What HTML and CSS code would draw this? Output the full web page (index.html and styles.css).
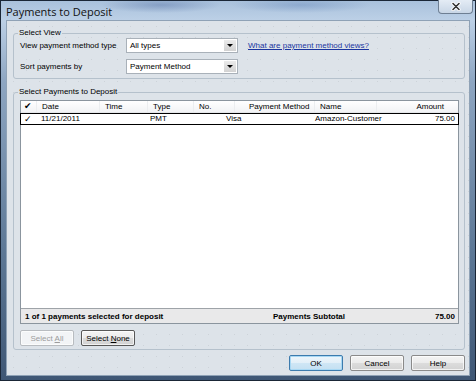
FILE: index.html
```html
<!DOCTYPE html>
<html lang="en">
<head>
    <meta charset="UTF-8">
    <title>Payments to Deposit</title>
    <link rel="stylesheet" href="styles.css">
</head>
<body>

<div class="window">
    <!-- Title bar -->
    <div class="titlebar">
        <span class="title">Payments to Deposit</span>
        <div class="close-btn">
            <svg width="10" height="9" viewBox="0 0 10 9">
                <path d="M2 1.5 L8 7.5 M8 1.5 L2 7.5" stroke="#fff" stroke-width="3.2" stroke-linecap="round"/>
                <path d="M2 1.5 L8 7.5 M8 1.5 L2 7.5" stroke="#333" stroke-width="1.6" stroke-linecap="round"/>
            </svg>
        </div>
    </div>

    <div class="client">
        <!-- Select View -->
        <fieldset class="group view-group">
            <legend>Select View</legend>
            <div class="field-row">
                <span class="field-label">View payment method type</span>
                <div class="combo">
                    <span class="combo-text">All types</span>
                    <span class="combo-arrow"></span>
                </div>
                <a class="help-link" href="#">What are payment method views?</a>
            </div>
            <div class="field-row">
                <span class="field-label">Sort payments by</span>
                <div class="combo">
                    <span class="combo-text">Payment Method</span>
                    <span class="combo-arrow"></span>
                </div>
            </div>
        </fieldset>

        <!-- Select Payments -->
        <fieldset class="group payments-group">
            <legend>Select Payments to Deposit</legend>
            <div class="list">
                <div class="list-head">
                    <span class="c-check">&#10004;</span>
                    <span class="c-date">Date</span>
                    <span class="c-time">Time</span>
                    <span class="c-type">Type</span>
                    <span class="c-no">No.</span>
                    <span class="c-method">Payment Method</span>
                    <span class="c-name">Name</span>
                    <span class="c-amount">Amount</span>
                </div>
                <div class="list-row selected">
                    <span class="c-check">&#10003;</span>
                    <span class="c-date">11/21/2011</span>
                    <span class="c-time"></span>
                    <span class="c-type">PMT</span>
                    <span class="c-no"></span>
                    <span class="c-method">Visa</span>
                    <span class="c-name">Amazon-Customer</span>
                    <span class="c-amount">75.00</span>
                </div>
                <div class="list-empty"></div>
                <div class="list-foot">
                    <span class="foot-count">1 of 1 payments selected for deposit</span>
                    <span class="foot-label">Payments Subtotal</span>
                    <span class="foot-total">75.00</span>
                </div>
            </div>
            <div class="select-buttons">
                <button class="btn" disabled>Select <u>A</u>ll</button>
                <button class="btn btn-dark">Select <u>N</u>one</button>
            </div>
        </fieldset>

        <div class="actions">
            <button class="btn btn-default">OK</button>
            <button class="btn">Cancel</button>
            <button class="btn">Help</button>
        </div>
    </div>
</div>

</body>
</html>
```

FILE: styles.css
```css
/* General Reset */
* {
    margin: 0;
    padding: 0;
    box-sizing: border-box;
    font-family: 'Liberation Sans', Arial, sans-serif;
}

body {
    background: #1d2b3a;
    width: 476px;
    height: 381px;
    overflow: hidden;
}

.window {
    width: 476px;
    height: 381px;
    border: 1px solid #1a2636;
    padding: 0 5px 4px 5px;
    display: flex;
    flex-direction: column;
    background:
        radial-gradient(ellipse 60px 8px at 160px 4px, rgba(60, 90, 150, 0.35), transparent),
        radial-gradient(ellipse 70px 8px at 300px 4px, rgba(70, 110, 170, 0.3), transparent),
        linear-gradient(to bottom, #a9c1dc, #bcd0e6 19px, #8ea6c2 80px, #5d7896 250px, #3f5775);
}

.titlebar {
    height: 19px;
    display: flex;
    align-items: center;
    position: relative;
}

.title {
    font-family: 'Open Sans', 'Liberation Sans', sans-serif;
    font-size: 11px;
    color: #111;
    margin-top: 1px;
    white-space: nowrap;
}

.close-btn {
    position: absolute;
    top: -1px;
    right: -3px;
    width: 35px;
    height: 14px;
    border: 1px solid #6e7f93;
    border-top: none;
    border-radius: 0 0 4px 4px;
    background: linear-gradient(to bottom, #e4ecf5, #c8d6e6);
    display: flex;
    align-items: center;
    justify-content: center;
}

.client {
    flex: 1;
    border: 1px solid #8fa2b6;
    background-color: #dde3e9;
    background-image: radial-gradient(circle, #cdd3d9 0.6px, transparent 1px);
    background-size: 13px 11px;
    display: flex;
    flex-direction: column;
    font-size: 8px;
    color: #000;
}

/* Group boxes */
.group {
    border: 1px solid #b5c1cc;
    border-radius: 3px;
    margin: 7px 4px 0 6px;
}

.group legend {
    font-size: 8px;
    line-height: 10px;
    padding: 0 1px;
    margin-left: -2px;
}

.view-group {
    padding: 0 0 4px 6px;
}

.field-row {
    display: flex;
    align-items: center;
    height: 15px;
    white-space: nowrap;
}

.field-row + .field-row {
    margin-top: 6px;
}

.field-label {
    width: 106px;
}

.combo {
    width: 112px;
    height: 15px;
    border: 1px solid #a9b1b9;
    background: #fff;
    display: flex;
    align-items: center;
    justify-content: space-between;
    padding: 0 1px 0 3px;
}

.combo-arrow {
    width: 12px;
    height: 11px;
    background: linear-gradient(to bottom, #ebebeb, #d2d2d2);
    position: relative;
}

.combo-arrow::after {
    content: "";
    position: absolute;
    left: 3px;
    top: 4px;
    border-left: 3px solid transparent;
    border-right: 3px solid transparent;
    border-top: 3px solid #000;
}

.help-link {
    margin-left: 10px;
    color: #1b36a0;
    text-decoration: underline;
}

/* Payments list */
.payments-group {
    margin-top: 8px;
    padding: 3px 5px 3px 6px;
}

.list {
    height: 224px;
    border: 1px solid #8b959e;
    background: #fff;
    display: flex;
    flex-direction: column;
}

.list-head,
.list-row {
    display: grid;
    grid-template-columns: 16px 63px 48px 46px 41px 80px 62px 1fr;
    align-items: center;
    white-space: nowrap;
}

.list-head {
    height: 12px;
    background: linear-gradient(to bottom, #fff, #f2f3f5);
    border-bottom: 1px solid #e4e6e9;
}

.list-head span {
    padding-left: 5px;
    border-right: 1px solid #eceef0;
    line-height: 11px;
}

.list-head .c-check,
.list-row .c-check {
    padding-left: 3px;
    font-family: 'DejaVu Sans', sans-serif;
    font-size: 9px;
}

.list-head .c-method {
    padding-left: 14px;
}

.list-head .c-amount {
    text-align: right;
    padding-right: 14px;
    border-right: none;
}

.list-row {
    height: 12px;
    border: 1px solid #000;
    margin: 0 -1px;
    line-height: 10px;
}

.list-row .c-date {
    padding-left: 4px;
}

.list-row .c-type {
    padding-left: 2px;
}

.list-row .c-method {
    margin-left: -9px;
}

.list-row .c-amount {
    text-align: right;
    padding-right: 3px;
}

.list-empty {
    flex: 1;
}

.list-foot {
    height: 15px;
    border-top: 1px solid #9ea3a8;
    background: #e9e9ea;
    display: flex;
    align-items: center;
    font-weight: bold;
    padding: 0 3px 0 4px;
    white-space: nowrap;
}

.foot-count {
    width: 248px;
}

.foot-label {
    flex: 1;
}

/* Buttons */
.select-buttons {
    display: flex;
    gap: 7px;
    margin-top: 6px;
}

.btn {
    height: 16px;
    width: 54px;
    font-size: 8px;
    font-family: 'Liberation Sans', Arial, sans-serif;
    color: #000;
    border: 1px solid #8a8a8a;
    border-radius: 2px;
    background: linear-gradient(to bottom, #f4f4f4, #ebebeb 50%, #dcdcdc 51%, #d2d2d2);
    box-shadow: inset 0 0 0 1px rgba(255, 255, 255, 0.7);
}

.btn u {
    font-family: inherit;
}

.btn:disabled {
    color: #9c9c9c;
    border-color: #b8bcc0;
    background: #f2f4f6;
}

.btn-dark {
    border-color: #585858;
}

.btn-default {
    border-color: #3d7bad;
    box-shadow: inset 0 0 0 1px #a8d8f4;
    background: linear-gradient(to bottom, #eef6fb, #e2eff8 50%, #cfe6f5 51%, #c4e0f2);
}

.actions {
    display: flex;
    justify-content: flex-end;
    gap: 7px;
    margin: 5px 4px 0 0;
}
```
